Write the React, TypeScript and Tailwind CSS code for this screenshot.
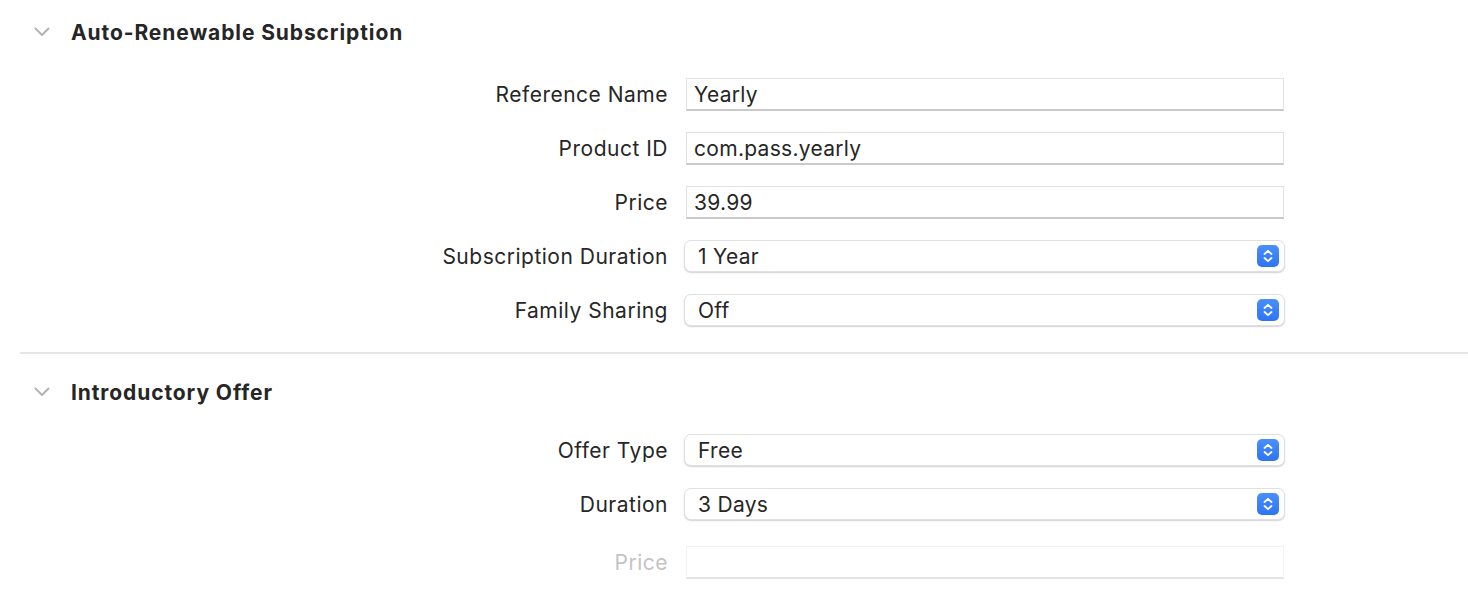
import React from "react";

const font = { fontFamily: "Inter, 'Noto Sans', sans-serif" };

function Chevron() {
  return (
    <svg width="16" height="10" viewBox="0 0 16 10" className="block">
      <path d="M1.5 1.5 L8 8 L14.5 1.5" fill="none" stroke="#b3b3b3" strokeWidth="2" strokeLinecap="round" strokeLinejoin="round" />
    </svg>
  );
}

function Header({ title }: { title: string }) {
  return (
    <div className="flex items-center h-[64px] pl-[34px]">
      <Chevron />
      <span className="ml-[21px] pt-[2px] text-[21px] font-bold text-[#262626] tracking-[0.9px]">{title}</span>
    </div>
  );
}

function Label({ text, disabled }: { text: string; disabled?: boolean }) {
  return (
    <div className={`w-[668px] pt-[2px] text-right text-[21px] tracking-[0.5px] ${disabled ? "text-[#c4c4c4]" : "text-[#262626]"}`}>{text}</div>
  );
}

function TextRow({ label, value, disabled }: { label: string; value: string; disabled?: boolean }) {
  return (
    <div className="flex items-center h-[54px]">
      <Label text={label} disabled={disabled} />
      <div
        className={`ml-[18px] w-[598px] h-[33px] flex items-center pl-[7px] pt-[2px] text-[21px] tracking-[0.3px] text-[#262626] bg-white border ${
          disabled ? "border-[#f2f2f2] border-b-[#e3e3e3]" : "border-[#e2e2e2] border-b-[#c9c9c9]"
        } border-b-2`}
      >
        {value}
      </div>
    </div>
  );
}

function PopupRow({ label, value }: { label: string; value: string }) {
  return (
    <div className="flex items-center h-[54px]">
      <Label text={label} />
      <div className="ml-[16px] w-[601px] h-[32px] flex items-center justify-between pl-[13px] pr-[5px] rounded-[7px] bg-white border border-[#e0e0e0] shadow-[0_1px_1.5px_rgba(0,0,0,0.18)]">
        <span className="pt-[2px] text-[21px] tracking-[0.3px] text-[#262626]">{value}</span>
        <div className="w-[22px] h-[22px] rounded-[5px] bg-gradient-to-b from-[#4a8ff9] to-[#2d74f4] flex items-center justify-center">
          <svg width="10" height="14" viewBox="0 0 10 14">
            <path d="M1.5 5 L5 1.8 L8.5 5" fill="none" stroke="white" strokeWidth="1.8" strokeLinecap="round" strokeLinejoin="round" />
            <path d="M1.5 9 L5 12.2 L8.5 9" fill="none" stroke="white" strokeWidth="1.8" strokeLinecap="round" strokeLinejoin="round" />
          </svg>
        </div>
      </div>
    </div>
  );
}

export default function App() {
  return (
    <div className="w-[1468px] h-[600px] bg-white overflow-hidden" style={font}>
      <Header title="Auto-Renewable Subscription" />
      <div className="mt-[3px]">
        <TextRow label="Reference Name" value="Yearly" />
        <TextRow label="Product ID" value="com.pass.yearly" />
        <TextRow label="Price" value="39.99" />
        <PopupRow label="Subscription Duration" value="1 Year" />
        <PopupRow label="Family Sharing" value="Off" />
      </div>
      <div className="mt-[15px] ml-[20px] h-[2px] bg-[#e6e6e6]" />
      <div className="mt-[6px]">
        <Header title="Introductory Offer" />
      </div>
      <div className="-mt-[1px]">
        <PopupRow label="Offer Type" value="Free" />
        <PopupRow label="Duration" value="3 Days" />
        <div className="mt-[4px]">
          <TextRow label="Price" value="" disabled />
        </div>
      </div>
    </div>
  );
}
